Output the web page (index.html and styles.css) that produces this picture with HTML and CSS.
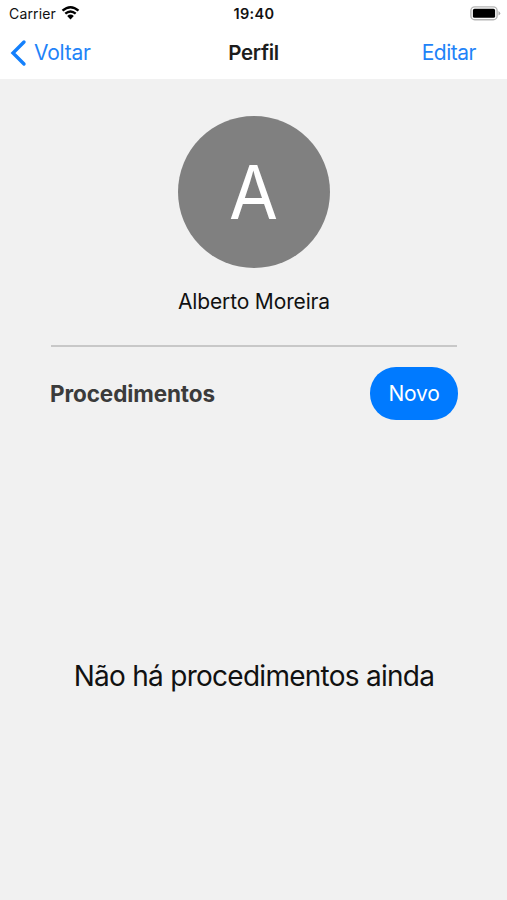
FILE: index.html
```
<!DOCTYPE html>
<html lang="pt-BR">
<head>
  <meta charset="UTF-8">
  <meta name="viewport" content="width=device-width, initial-scale=1.0">
  <title>Perfil</title>
  <link rel="stylesheet" href="styles.css">
</head>
<body>
  <div class="status-bar">
    <div class="carrier">
      <span>Carrier</span>
      <svg class="wifi" width="19" height="14" viewBox="0 0 18 14">
        <path d="M1 4.7Q9 -2.2 17 4.7M3.8 7.7Q9 3.2 14.2 7.7" fill="none" stroke="#000" stroke-width="2.4"/>
        <path d="M5.7 10Q9 7.2 12.3 10L9 13.5Z"/>
      </svg>
    </div>
    <span class="time">19:40</span>
    <div class="battery">
      <svg width="31" height="15" viewBox="0 0 31 15">
        <rect x="0.9" y="0.9" width="26.2" height="12.8" rx="3.8" fill="#fff" stroke="#b5b5b5" stroke-width="1.4"/>
        <rect x="2.9" y="2.8" width="22.2" height="9" rx="1.6"/>
        <path d="M28.5 5Q32 7.3 28.5 9.6Z" fill="#aaa"/>
      </svg>
    </div>
  </div>

  <nav class="navbar">
    <a class="back" href="#">
      <svg width="17" height="28" viewBox="0 0 17 28">
        <path d="M14 3L3 14L14 25" fill="none" stroke="#1480fc" stroke-width="3.4" stroke-linecap="round"/>
      </svg>
      <span>Voltar</span>
    </a>
    <h1>Perfil</h1>
    <a class="edit" href="#">Editar</a>
  </nav>

  <main class="profile">
    <div class="avatar"><span>A</span></div>
    <p class="name">Alberto Moreira</p>
    <div class="procedures">
      <h2>Procedimentos</h2>
      <button class="new-button">Novo</button>
    </div>
    <p class="empty">Não há procedimentos ainda</p>
  </main>
</body>
</html>
```
FILE: styles.css
```
* {
  box-sizing: border-box;
}

body {
  margin: 0;
  height: 900px;
  background: #f1f1f1;
  color: #111;
  font-family: Inter, "Liberation Sans", sans-serif;
  display: flex;
  flex-direction: column;
}

h1, h2, p {
  margin: 0;
}

a {
  color: #1f83f8;
  text-decoration: none;
}

.status-bar {
  height: 27px;
  padding: 0 6px 0 9px;
  background: #fff;
  display: grid;
  grid-template-columns: 1fr auto 1fr;
  align-items: center;
  font-size: 14px;
}

.carrier {
  display: flex;
  align-items: center;
  gap: 5px;
  letter-spacing: 0.15px;
}

.wifi {
  margin-top: -1px;
}

.time {
  font-weight: 600;
  font-size: 14.5px;
  letter-spacing: 0.3px;
  padding-right: 2px;
}

.battery {
  display: flex;
  justify-content: flex-end;
}

.navbar {
  height: 52px;
  padding: 0 10px 1px;
  background: #fff;
  display: grid;
  grid-template-columns: 1fr auto 1fr;
  align-items: center;
  font-size: 21px;
}

.navbar h1 {
  font-size: 20.5px;
  font-weight: 600;
  letter-spacing: -0.3px;
  color: #1c1c1c;
}

.back {
  display: flex;
  align-items: center;
  gap: 7px;
  letter-spacing: -0.25px;
}

.edit {
  padding-right: 21px;
  text-align: right;
  letter-spacing: -0.5px;
}

.profile {
  flex: 1;
  padding: 36.5px 49px 0 50px;
  display: flex;
  flex-direction: column;
}

.avatar {
  align-self: center;
  width: 152px;
  height: 152px;
  border-radius: 50%;
  background: #808080;
  color: #fff;
  font-size: 74px;
  display: flex;
  align-items: center;
  justify-content: center;
}

.avatar span {
  transform: scaleX(0.96);
}

.name {
  margin-top: 20.5px;
  font-size: 21px;
  line-height: 28px;
  letter-spacing: -0.15px;
  text-align: center;
}

/* the divider is a bit narrower than the row */
.procedures {
  margin-top: 29px;
  padding-top: 22px;
  background: linear-gradient(#c8c8c8, #c8c8c8) 1px 0 / calc(100% - 2px) 2px no-repeat;
  display: flex;
  align-items: center;
  justify-content: space-between;
}

.procedures h2 {
  color: #3b3b3b;
  font-size: 22.5px;
  font-weight: 700;
  letter-spacing: -0.1px;
}

.new-button {
  width: 88px;
  height: 53px;
  border: 0;
  border-radius: 26px;
  background: #007aff;
  color: #fff;
  font-family: inherit;
  font-size: 21px;
  letter-spacing: -0.2px;
}

.empty {
  margin-top: 236px;
  font-size: 28px;
  line-height: 40px;
  letter-spacing: -0.73px;
  text-align: center;
}
```
